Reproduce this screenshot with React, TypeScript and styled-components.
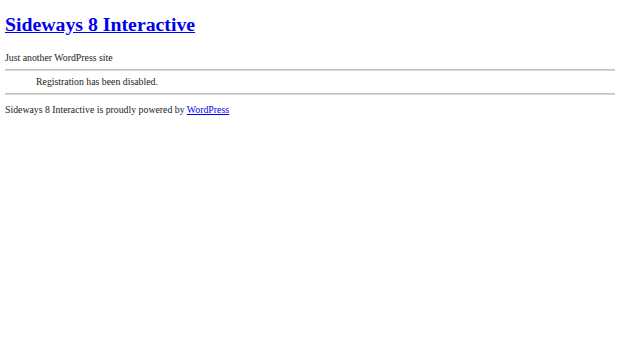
import React from "react";
import styled, { createGlobalStyle } from "styled-components";

const Global = createGlobalStyle`
  html, body { margin: 0; padding: 0; background: #fff; }
  body { font-family: "Liberation Serif", "Times New Roman", serif; font-size: 9.8px; color: #222; }
`;

const Page = styled.div`
  padding: 0 5px;
`;

const Header = styled.header`
  padding-top: 13px;
`;

const Title = styled.h1`
  margin: 0;
  font-size: 19.8px;
  line-height: 23px;
  font-weight: bold;
  a { color: #0000ee; text-decoration: underline; }
`;

const Tagline = styled.p`
  margin: 16px 0 0;
  line-height: 12px;
`;

const Rule = styled.hr<{ $gap: number }>`
  margin: ${(p) => p.$gap}px 0 0;
  border: 0;
  border-top: 1px solid #c2c2c2;
  border-bottom: 1px solid #d6d6d6;
  height: 0;
`;

const Content = styled.div`
  padding: 5px 0 5px 31px;
  line-height: 12px;
`;

const Footer = styled.footer`
  margin-top: 9px;
  line-height: 12px;
  a { color: #0000ee; text-decoration: underline; }
`;

export default function App() {
  return (
    <Page>
      <Global />
      <Header>
        <Title><a href="#">Sideways 8 Interactive</a></Title>
        <Tagline>Just another WordPress site</Tagline>
      </Header>
      <Rule $gap={5} />
      <Content>Registration has been disabled.</Content>
      <Rule $gap={0} />
      <Footer>
        Sideways 8 Interactive is proudly powered by <a href="#">WordPress</a>
      </Footer>
    </Page>
  );
}
